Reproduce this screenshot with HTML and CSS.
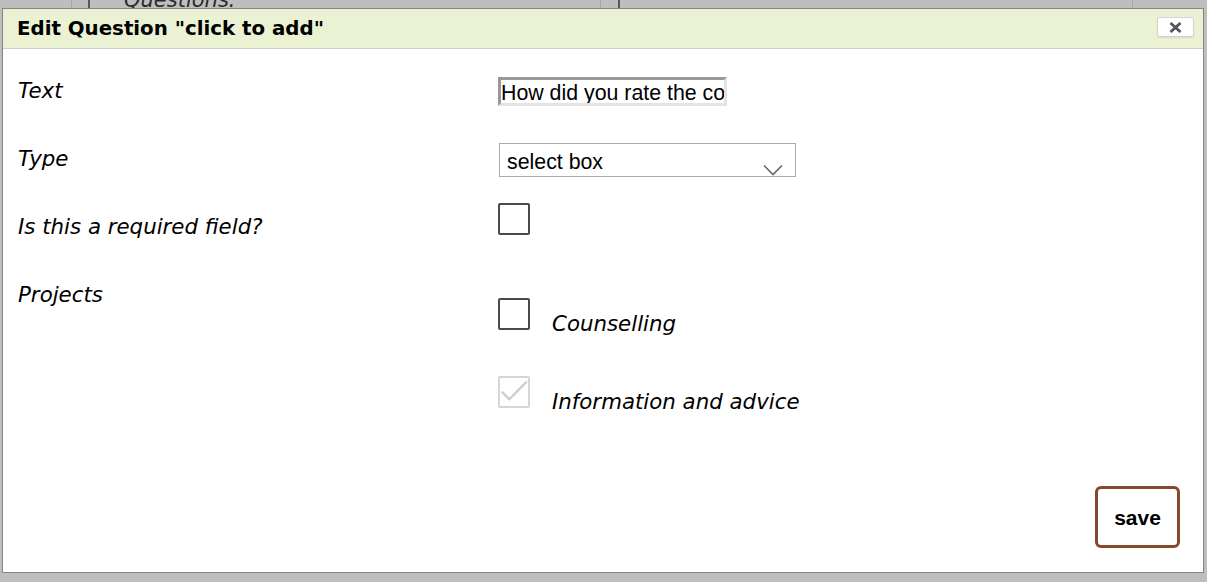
FILE: index.html
```html
<!DOCTYPE html>
<html lang="en">
<head>
<meta charset="utf-8">
<title>Edit Question</title>
<link rel="stylesheet" href="styles.css">
</head>
<body>
<div class="page">
  <div class="col col-a"></div>
  <div class="col col-b"></div>
  <div class="col col-c"><div class="page-heading">Questions:</div></div>
  <div class="col col-d"></div>
  <div class="col col-e"></div>
</div>

<div class="dialog">
  <div class="dlg-header">
    <span class="dlg-title">Edit Question "click to add"</span>
    <button class="dlg-close" type="button" aria-label="close">
      <svg width="13" height="11" viewBox="0 0 13 11"><path d="M1.5 1 L11.5 10 M11.5 1 L1.5 10" stroke="#555" stroke-width="2.8" fill="none"/></svg>
    </button>
  </div>
  <div class="dlg-body">
    <div class="form">
      <div class="lbl">Text</div>
      <div class="val v-text"><input class="txt" type="text" value="How did you rate the counselling service?"></div>

      <div class="lbl">Type</div>
      <div class="val v-type">
        <div class="select-wrap">
          <select class="sel"><option>select box</option></select>
          <svg class="chev" width="22" height="12" viewBox="0 0 22 12"><path d="M1 1.5 L10 10.5 L19 1.5" stroke="#666" stroke-width="1.6" fill="none"/></svg>
        </div>
      </div>

      <div class="lbl">Is this a required field?</div>
      <div class="val v-req"><span class="box"></span></div>

      <div class="lbl">Projects</div>
      <div class="val v-proj">
        <div class="proj"><span class="box"></span><span class="proj-lbl">Counselling</span></div>
        <div class="proj"><span class="box box-dis"><svg width="28" height="28" viewBox="0 0 28 28"><path d="M1.7 13.7 L9.3 21.3 L26.7 3.7" stroke="#cfcfcf" stroke-width="2.4" fill="none"/></svg></span><span class="proj-lbl">Information and advice</span></div>
      </div>
    </div>
  </div>
  <div class="dlg-footer">
    <button class="save" type="button">save</button>
  </div>
</div>
</body>
</html>
```

FILE: styles.css
```css
html, body {
  margin: 0;
  padding: 0;
}
body {
  background: #bebebe;
  width: 1207px;
  height: 582px;
  overflow: hidden;
  position: relative;
  font-family: "DejaVu Sans", Verdana, sans-serif;
}

/* page behind the modal */
.page {
  display: flex;
  height: 12px;
  overflow: hidden;
}
.col { height: 100%; }
.col-a { width: 71px; border-right: 1px solid #a6a6a6; }
.col-b { width: 16px; border-right: 2px solid #595959; }
.col-c { width: 511px; padding-left: 34px; box-sizing: border-box; border-right: 1px solid #a6a6a6; }
.col-d { width: 17px; border-right: 2px solid #595959; }
.col-e { width: 512px; border-right: 1px solid #a6a6a6; }
.page-heading {
  font-style: italic;
  font-size: 21px;
  line-height: 25px;
  color: #2b2b2b;
  margin-top: -12px;
}

/* modal dialog */
.dialog {
  position: absolute;
  top: 8px;
  left: 2px;
  width: 1202px;
  height: 565px;
  box-sizing: border-box;
  border: 1px solid #858585;
  background: #fff;
  display: flex;
  flex-direction: column;
}
.dlg-header {
  height: 40px;
  box-sizing: border-box;
  background: #ebf2d3;
  border-bottom: 1px solid #cdcdcd;
  display: flex;
  align-items: center;
  justify-content: space-between;
  padding: 0 9px 0 14px;
}
.dlg-title {
  font-weight: bold;
  font-size: 19.8px;
  color: #000;
}
.dlg-close {
  align-self: flex-start;
  margin-top: 8px;
  width: 37px;
  height: 20px;
  box-sizing: border-box;
  background: #fff;
  border: 1px solid #d2d2d2;
  border-radius: 2px;
  box-shadow: 0 1px 1px rgba(0,0,0,0.08);
  padding: 0;
  display: flex;
  align-items: center;
  justify-content: center;
}
.dlg-close svg { display: block; }

.dlg-body {
  flex: 1;
  padding: 29px 0 0 15px;
}
.form {
  display: grid;
  grid-template-columns: 480px 1fr;
  grid-template-rows: 68px 68px 68px auto;
  align-items: start;
}
.lbl {
  font-style: italic;
  font-size: 21.33px;
  line-height: 25px;
  color: #000;
}
.val { align-self: start; }
.v-text { margin-top: -1px; }
.v-type { margin-top: -3px; margin-left: 1px; }
.v-req { margin-top: -11px; }
.v-proj { margin-top: 16px; display: flex; flex-direction: column; gap: 46px; }

.txt {
  display: block;
  width: 229px;
  height: 29px;
  box-sizing: border-box;
  margin: 0;
  padding: 3px 0 0 0;
  border-style: solid;
  border-width: 3px;
  border-color: #999 #e3e3e3 #e3e3e3 #999;
  font-family: "Liberation Sans", Arial, sans-serif;
  font-size: 21.33px;
  line-height: 20px;
  color: #000;
  background: #fff;
  outline: none;
}

.select-wrap {
  position: relative;
  width: 297px;
  height: 34px;
}
.sel {
  -webkit-appearance: none;
  appearance: none;
  display: block;
  width: 297px;
  height: 34px;
  box-sizing: border-box;
  margin: 0;
  padding: 3px 0 0 7px;
  border: 1px solid #a9a9a9;
  border-radius: 0;
  background: #fff;
  font-family: "Liberation Sans", Arial, sans-serif;
  font-size: 21.33px;
  color: #000;
}
.chev {
  position: absolute;
  left: 264px;
  top: 21px;
  pointer-events: none;
}

.box {
  display: block;
  width: 32px;
  height: 32px;
  box-sizing: border-box;
  border: 2px solid #4a4a4a;
  border-radius: 2px;
  background: #fff;
  flex: none;
}
.box-dis {
  border-color: #d6d6d6;
}
.box-dis svg { display: block; }

.proj {
  display: flex;
  align-items: flex-end;
}
.proj-lbl {
  font-style: italic;
  font-size: 21.33px;
  line-height: 25px;
  color: #000;
  margin-left: 22px;
  margin-bottom: -6px;
}

.dlg-footer {
  display: flex;
  justify-content: flex-end;
  padding: 0 23px 24px 0;
}
.save {
  width: 85px;
  height: 62px;
  box-sizing: border-box;
  border: 3px solid #86472b;
  border-radius: 6px;
  background: #fff;
  font-family: "Liberation Sans", Arial, sans-serif;
  font-weight: bold;
  font-size: 21px;
  color: #000;
  padding: 2px 0 0 0;
}
```
